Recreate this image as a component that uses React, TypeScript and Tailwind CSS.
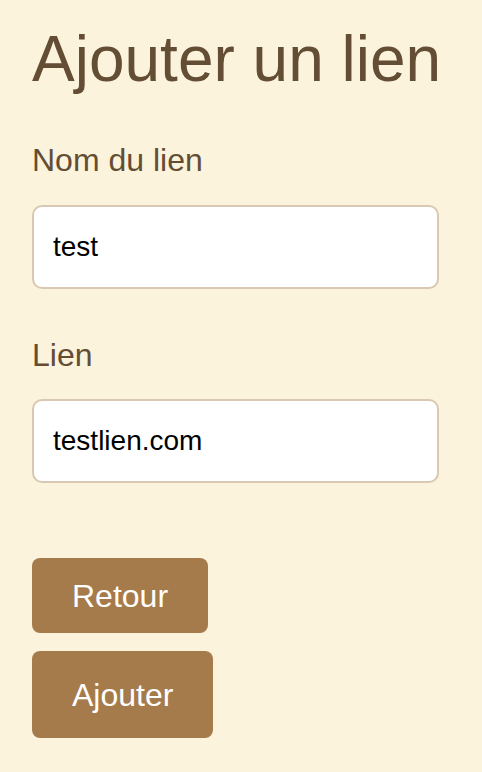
export default function App() {
  return (
    <div className="min-h-[772px] bg-[#fcf3dc] px-8 pt-[22px] font-['Liberation_Sans',Arial,sans-serif] text-[#634d34]">
      <h1 className="text-[64px] leading-[74px] font-normal">Ajouter un lien</h1>

      <form className="flex w-[407px] flex-col" onSubmit={(e) => e.preventDefault()}>
        <label htmlFor="nom" className="mt-[46px] text-[32px] leading-[36px]">
          Nom du lien
        </label>
        <input
          id="nom"
          defaultValue="test"
          className="mt-[27px] h-[84px] rounded-[10px] border-2 border-[#d9c8b3] bg-white px-[19px] text-[28px] text-black outline-none"
        />

        <label htmlFor="lien" className="mt-[48px] text-[32px] leading-[36px]">
          Lien
        </label>
        <input
          id="lien"
          defaultValue="testlien.com"
          className="mt-[26px] h-[84px] rounded-[10px] border-2 border-[#d9c8b3] bg-white px-[19px] text-[28px] text-black outline-none"
        />

        <div className="mt-[75px] flex flex-col items-start gap-[18px]">
          <button type="button" className="h-[75px] rounded-[8px] bg-[#a57b4b] px-10 text-[32px] text-white">
            Retour
          </button>
          <button type="submit" className="h-[87px] rounded-[8px] bg-[#a57b4b] px-10 text-[32px] text-white">
            Ajouter
          </button>
        </div>
      </form>
    </div>
  );
}
